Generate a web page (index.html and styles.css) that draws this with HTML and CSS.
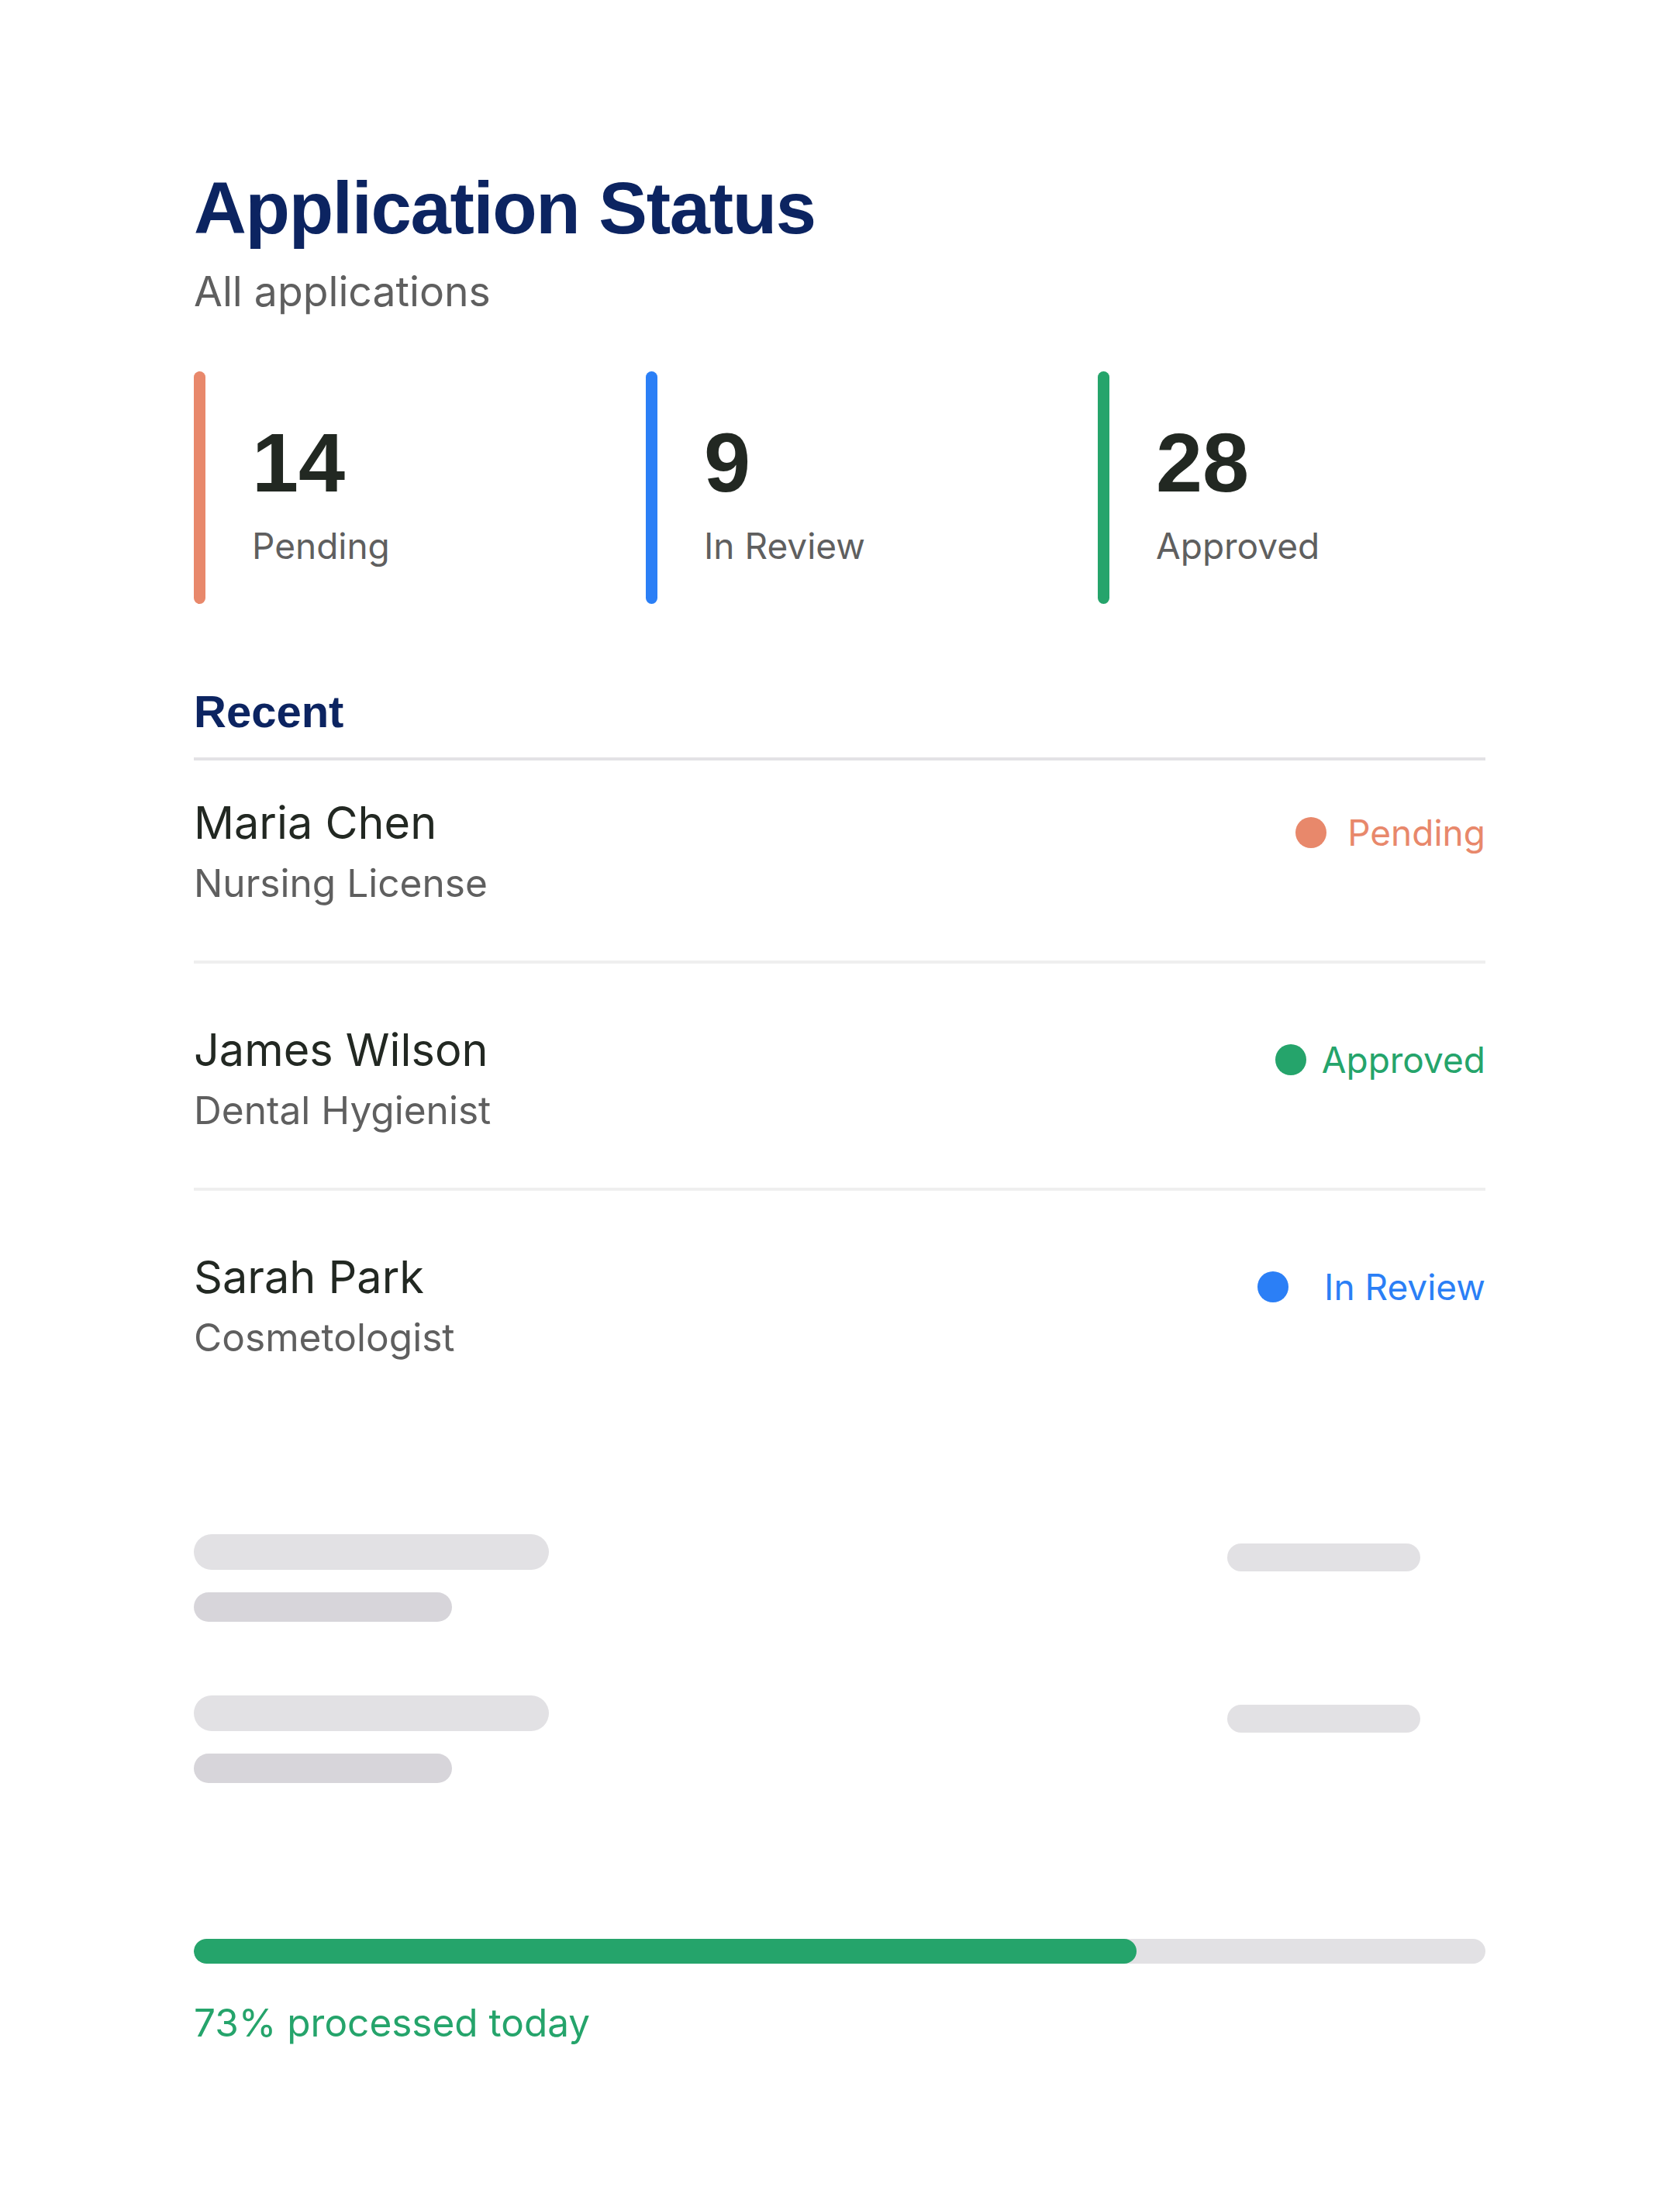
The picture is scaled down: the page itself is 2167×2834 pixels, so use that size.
FILE: index.html
```html
<!DOCTYPE html>
<html lang="en">
<head>
<meta charset="utf-8">
<title>Application Status</title>
<link rel="stylesheet" href="styles.css">
</head>
<body>
<main class="card">
  <h1 class="title">Application Status</h1>
  <p class="subtitle">All applications</p>

  <section class="stats">
    <div class="stat">
      <div class="stat-bar bar-pending"></div>
      <div class="stat-body">
        <div class="stat-num">14</div>
        <div class="stat-label">Pending</div>
      </div>
    </div>
    <div class="stat">
      <div class="stat-bar bar-review"></div>
      <div class="stat-body">
        <div class="stat-num">9</div>
        <div class="stat-label">In Review</div>
      </div>
    </div>
    <div class="stat">
      <div class="stat-bar bar-approved"></div>
      <div class="stat-body">
        <div class="stat-num">28</div>
        <div class="stat-label">Approved</div>
      </div>
    </div>
  </section>

  <h2 class="recent-title">Recent</h2>
  <div class="recent-divider"></div>

  <ul class="rows">
    <li class="row row-first">
      <div class="who">
        <div class="name">Maria Chen</div>
        <div class="role">Nursing License</div>
      </div>
      <div class="status status-pending"><span class="dot"></span><span class="status-text">Pending</span></div>
    </li>
    <li class="row">
      <div class="who">
        <div class="name">James Wilson</div>
        <div class="role">Dental Hygienist</div>
      </div>
      <div class="status status-approved"><span class="dot"></span><span class="status-text">Approved</span></div>
    </li>
    <li class="row row-last">
      <div class="who">
        <div class="name">Sarah Park</div>
        <div class="role">Cosmetologist</div>
      </div>
      <div class="status status-review"><span class="dot"></span><span class="status-text">In Review</span></div>
    </li>
  </ul>

  <section class="skeletons">
    <div class="sk-row">
      <div class="sk-left">
        <div class="sk sk-long"></div>
        <div class="sk sk-short"></div>
      </div>
      <div class="sk sk-right"></div>
    </div>
    <div class="sk-row">
      <div class="sk-left">
        <div class="sk sk-long"></div>
        <div class="sk sk-short"></div>
      </div>
      <div class="sk sk-right"></div>
    </div>
  </section>

  <section class="progress">
    <div class="track"><div class="fill" style="width: 73%"></div></div>
    <p class="progress-text">73% processed today</p>
  </section>
</main>
</body>
</html>
```

FILE: styles.css
```css
* { box-sizing: border-box; }

html, body {
  margin: 0;
  padding: 0;
  background: #ffffff;
}

body {
  font-family: Inter, "Noto Sans", sans-serif;
  color: #222822;
}

.card {
  width: 2167px;
  padding: 217px 251px 120px 250px;
}

.title {
  margin: 0;
  font-family: "Liberation Sans", Arial, sans-serif;
  font-weight: 700;
  font-size: 94px;
  line-height: 103px;
  letter-spacing: -1.3px;
  color: #0c2461;
}

.subtitle {
  margin: 25px 0 0;
  font-size: 53.5px;
  line-height: 62px;
  color: #5f5f5f;
}

/* stats */
.stats {
  margin-top: 72px;
  display: grid;
  grid-template-columns: repeat(3, 1fr);
  column-gap: 83px;
}

.stat {
  display: flex;
  height: 300px;
}

.stat-bar {
  width: 15px;
  border-radius: 8px;
  flex: none;
}

.bar-pending { background: #e8886b; }
.bar-review { background: #2b7ff6; }
.bar-approved { background: #25a46b; }

.stat-body {
  padding: 64px 0 0 60px;
}

.stat-num {
  font-family: "Liberation Sans", Arial, sans-serif;
  font-weight: 700;
  font-size: 108px;
  line-height: 108px;
  color: #222822;
}

.stat-label {
  margin-top: 26px;
  font-size: 46px;
  line-height: 54px;
  color: #5f5f5f;
}

/* recent */
.recent-title {
  margin: 104px 0 0;
  font-family: "Liberation Sans", Arial, sans-serif;
  font-weight: 700;
  font-size: 58px;
  line-height: 70px;
  color: #0c2461;
}

.recent-divider {
  margin-top: 24px;
  height: 4px;
  background: #e3e2e5;
}

.rows {
  list-style: none;
  margin: 0;
  padding: 0;
}

.row {
  display: flex;
  justify-content: space-between;
  align-items: flex-start;
  padding: 77px 0 71px;
  border-bottom: 4px solid #efefef;
}

.row-first { padding-top: 46px; }
.row-last { border-bottom: none; }

.name {
  font-size: 57.6px;
  line-height: 69px;
  color: #222822;
}

.role {
  margin-top: 14px;
  font-size: 49.6px;
  line-height: 58px;
  color: #5f5f5f;
}

.status {
  display: flex;
  align-items: center;
  margin-top: 20px;
  font-size: 46px;
  line-height: 54px;
}

.dot {
  width: 40px;
  height: 40px;
  border-radius: 50%;
  flex: none;
}

.status-pending { color: #e8886b; gap: 27px; }
.status-pending .dot { background: #e8886b; }
.status-approved { color: #25a46b; gap: 20px; }
.status-approved .dot { background: #25a46b; }
.status-review { color: #2b7ff6; gap: 46px; }
.status-review .dot { background: #2b7ff6; }

/* skeletons */
.skeletons {
  margin-top: 154px;
}

.sk-row {
  display: flex;
  justify-content: space-between;
  align-items: flex-start;
  padding-right: 84px;
}

.sk-row + .sk-row { margin-top: 95px; }

.sk {
  border-radius: 999px;
}

.sk-long {
  width: 458px;
  height: 46px;
  background: #e2e1e4;
}

.sk-short {
  margin-top: 29px;
  width: 333px;
  height: 38px;
  background: #d7d5da;
}

.sk-right {
  margin-top: 12px;
  width: 249px;
  height: 36px;
  background: #e2e1e4;
}

/* progress */
.progress {
  margin-top: 201px;
}

.track {
  height: 32px;
  border-radius: 999px;
  background: #e2e1e4;
  overflow: hidden;
}

.fill {
  height: 100%;
  border-radius: 999px;
  background: #25a46b;
}

.progress-text {
  margin: 46px 0 0;
  font-size: 49.5px;
  line-height: 60px;
  color: #25a46b;
}
```
